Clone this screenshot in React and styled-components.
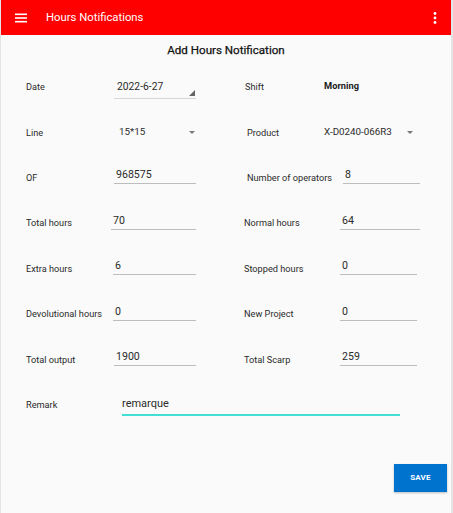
import React from 'react'
import styled, { createGlobalStyle } from 'styled-components'

const GlobalStyle = createGlobalStyle`
  html, body {
    margin: 0;
    padding: 0;
    background: #fafafa;
    font-family: Roboto, "Noto Sans", "Liberation Sans", sans-serif;
  }
`

const fields = [
  { label: 'Date', value: '2022-6-27', kind: 'date', right: { label: 'Shift', value: 'Morning', kind: 'bold', shift: 1 } },
  { label: 'Line', value: '15*15', kind: 'select', pad: 5, trim: 1, right: { label: 'Product', value: 'X-D0240-066R3', kind: 'select', shift: 3, pad: 0, trim: 7 } },
  { label: 'OF', value: '968575', kind: 'text', right: { label: 'Number of operators', value: '8', kind: 'text', shift: 3, indent: 19 } },
  { label: 'Total hours', value: '70', kind: 'text', indent: -3, right: { label: 'Normal hours', value: '64', kind: 'text', shift: 0, indent: 16 } },
  { label: 'Extra hours', value: '6', kind: 'text', indent: -1, right: { label: 'Stopped hours', value: '0', kind: 'text', shift: 0, indent: 16, trim: 3 } },
  { label: 'Devolutional hours', value: '0', kind: 'text', indent: -1, right: { label: 'New Project', value: '0', kind: 'text', shift: 0, indent: 16, trim: 3 } },
  { label: 'Total output', value: '1900', kind: 'text', right: { label: 'Total Scarp', value: '259', kind: 'text', shift: 0, indent: 16, trim: 3 } },
]

function MenuIcon() {
  return (
    <svg width="12" height="10" viewBox="0 0 12 10">
      <rect x="0" y="0.5" width="12" height="1.6" fill="#fff" />
      <rect x="0" y="4.2" width="12" height="1.6" fill="#fff" />
      <rect x="0" y="7.9" width="12" height="1.6" fill="#fff" />
    </svg>
  )
}

function MoreIcon() {
  return (
    <svg width="4" height="12" viewBox="0 0 4 12">
      <circle cx="2" cy="1.5" r="1.4" fill="#fff" />
      <circle cx="2" cy="6" r="1.4" fill="#fff" />
      <circle cx="2" cy="10.5" r="1.4" fill="#fff" />
    </svg>
  )
}

function FieldValue({ value, kind, indent, trim, pad }) {
  if (kind === 'bold') return <BoldValue>{value}</BoldValue>
  if (kind === 'select') {
    return (
      <SelectBox pad={pad} trim={trim}>
        <span>{value}</span>
        <Caret />
      </SelectBox>
    )
  }
  if (kind === 'date') {
    return (
      <DateBox>
        <span>{value}</span>
        <Corner />
      </DateBox>
    )
  }
  return <TextBox indent={indent} trim={trim}>{value}</TextBox>
}

export default function App() {
  return (
    <Screen>
      <GlobalStyle />
      <AppBar>
        <IconSlot><MenuIcon /></IconSlot>
        <Title>Hours Notifications</Title>
        <IconSlot right><MoreIcon /></IconSlot>
      </AppBar>
      <Heading>Add Hours Notification</Heading>
      <Form>
        {fields.map((f) => (
          <Row key={f.label}>
            <Label>{f.label}</Label>
            <FieldValue {...f} />
            <span />
            <Label shift={f.right.shift}>{f.right.label}</Label>
            <FieldValue {...f.right} />
          </Row>
        ))}
        <RemarkRow>
          <Label>Remark</Label>
          <RemarkBox>remarque</RemarkBox>
        </RemarkRow>
      </Form>
      <Footer>
        <SaveButton>SAVE</SaveButton>
      </Footer>
    </Screen>
  )
}

const Screen = styled.div`
  width: 453px;
  height: 513px;
  box-sizing: border-box;
  border-left: 1px solid #e4e4e4;
  border-right: 2px solid #e4e4e4;
  background: #fafafa;
  display: flex;
  flex-direction: column;
  overflow: hidden;
`

const AppBar = styled.div`
  height: 35px;
  background: #fe0000;
  display: flex;
  align-items: center;
  padding: 0 14px 0 14px;
  flex-shrink: 0;
`

const IconSlot = styled.div`
  display: flex;
  align-items: center;
  width: ${(p) => (p.right ? 'auto' : '31px')};
  margin-left: ${(p) => (p.right ? 'auto' : '0')};
`

const Title = styled.div`
  color: #fff;
  font-size: 11.3px;
  line-height: 16px;
`

const Heading = styled.div`
  text-align: center;
  font-size: 11.6px;
  font-weight: 400;
  color: #111;
  -webkit-text-stroke: 0.25px #111;
  margin-top: 7px;
  line-height: 16px;
`

const Form = styled.div`
  padding: 6px 0 0 25px;
  display: flex;
  flex-direction: column;
`

const Row = styled.div`
  height: 45.4px;
  display: grid;
  grid-template-columns: 88px 82px 48px 80px 96px;
  align-items: center;
`

const RemarkRow = styled.div`
  height: 45px;
  display: grid;
  grid-template-columns: 96px 278px;
  align-items: center;
`

const Label = styled.div`
  font-size: 9.2px;
  color: #2b2b2b;
  white-space: nowrap;
  padding-left: ${(p) => p.shift || 0}px;
`

const TextBox = styled.div`
  font-size: 10.6px;
  line-height: 14px;
  color: #2b2b2b;
  padding: 0 0 1px 2px;
  border-bottom: 1.5px solid #bdbdbd;
  margin-top: -2px;
  margin-left: ${(p) => p.indent || 0}px;
  margin-right: ${(p) => p.trim || 0}px;
`

const DateBox = styled.div`
  position: relative;
  font-size: 10.3px;
  line-height: 14px;
  color: #2b2b2b;
  padding: 0 0 4px 3px;
  border-bottom: 1px solid #d6d6d6;
  margin-top: 6px;
`

const Corner = styled.span`
  position: absolute;
  right: 1px;
  bottom: 2px;
  width: 0;
  height: 0;
  border-left: 6px solid transparent;
  border-bottom: 6px solid #666;
`

const SelectBox = styled.div`
  display: flex;
  align-items: center;
  justify-content: space-between;
  font-size: 9.8px;
  line-height: 14px;
  color: #2b2b2b;
  padding-left: ${(p) => p.pad || 0}px;
  margin-right: ${(p) => p.trim || 0}px;
`

const Caret = styled.span`
  width: 0;
  height: 0;
  border-left: 3px solid transparent;
  border-right: 3px solid transparent;
  border-top: 3px solid #777;
`

const BoldValue = styled.div`
  font-size: 9.3px;
  font-weight: 700;
  color: #1a1a1a;
  margin-top: -2px;
`

const RemarkBox = styled.div`
  font-size: 11px;
  line-height: 14px;
  color: #2b2b2b;
  padding: 0 0 3px 0;
  border-bottom: 2px solid #42e0d4;
  margin-top: 5px;
`

const Footer = styled.div`
  display: flex;
  justify-content: flex-end;
  padding: 37px 4px 0 0;
`

const SaveButton = styled.button`
  width: 53px;
  height: 28px;
  border: none;
  border-radius: 0;
  background: #0073cf;
  color: #fff;
  font-family: Roboto, "Liberation Sans", sans-serif;
  font-size: 8px;
  font-weight: 700;
  letter-spacing: 0.2px;
  padding: 0;
  box-shadow: 0 1px 2px rgba(0, 0, 0, 0.25);
`
